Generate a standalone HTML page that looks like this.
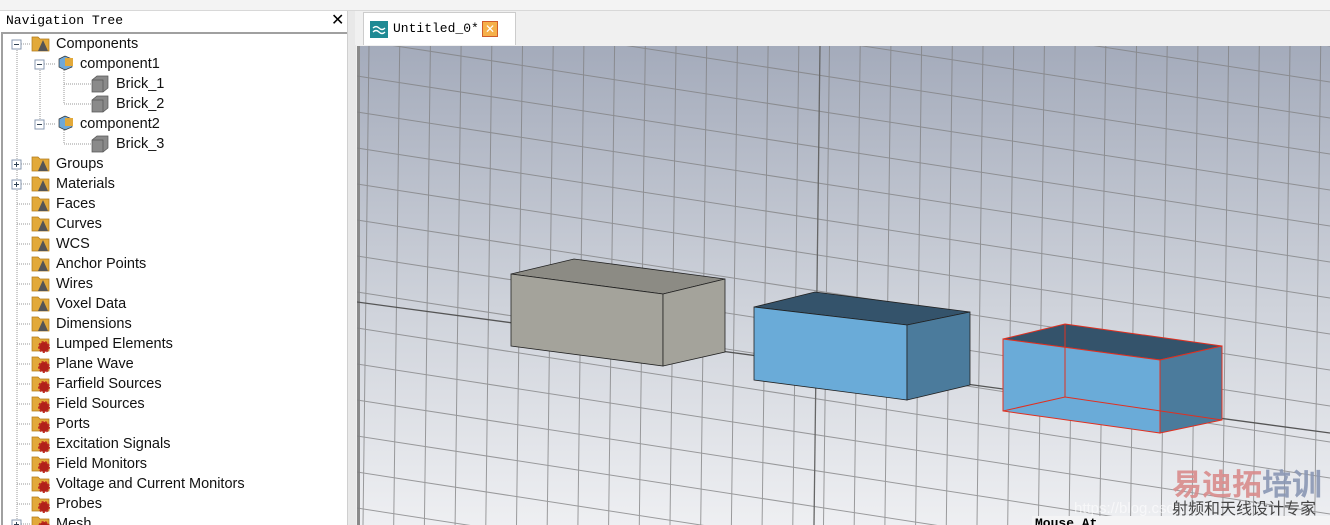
<!DOCTYPE html>
<html style="overflow:hidden"><head><meta charset="utf-8"><style>
html,body{margin:0;width:1330px;height:525px;overflow:hidden}
body{background:#f0f0f0;font-family:"Liberation Sans","DejaVu Sans",sans-serif;position:relative}
.top{position:absolute;left:0;top:0;width:1330px;height:10px;background:#f3f3f3;border-bottom:1px solid #d8d8d8}
.panel{position:absolute;left:0;top:11px;width:347px;height:514px;background:#fff;overflow:hidden}
.hdr{position:absolute;left:6px;top:2px;font-family:"Liberation Mono",monospace;font-size:13px;color:#000}
.x{position:absolute;left:331px;top:-1px;font-size:16px;font-weight:bold}
.tree{position:absolute;left:1px;top:21px;width:344px;height:500px;border-top:2px solid #a0a0a0;border-left:2px solid #a0a0a0}
.it{position:absolute;font-size:14.5px;color:#111;white-space:nowrap;line-height:18px}
.sep{position:absolute;left:347px;top:11px;width:8px;height:514px;background:#e8e8e8;border-left:1px solid #cfcfcf}
.tabbar{position:absolute;left:355px;top:11px;width:975px;height:34px;background:#f0f0f0}
.tab{position:absolute;left:363px;top:12px;width:151px;height:32px;background:#fff;border:1px solid #ccc;border-bottom:none}
.vp{position:absolute;left:357px;top:46px}
#clip{position:absolute;left:0;top:0;width:1330px;height:525px;overflow:hidden}
</style></head><body><div id="clip">
<div class="top"></div>
<div class="panel">
<div class="hdr">Navigation Tree</div><div class="x">✕</div>
<div class="tree"></div>
</div>
<svg style="position:absolute;left:0;top:0" width="347" height="525">
<g stroke="#999" stroke-dasharray="1,1" fill="none">
<line x1="17" y1="50" x2="17" y2="525"/>
<line x1="40" y1="70" x2="40" y2="124"/>
<line x1="64" y1="70" x2="64" y2="104"/>
<line x1="64" y1="130" x2="64" y2="144"/>
</g>
<g id="rows"></g>
</svg>
<div id="items"></div>
<div class="sep"></div>
<div class="tabbar"></div>
<div class="tab">
<div style="position:absolute;left:6px;top:8px;width:18px;height:17px;background:#1f8a94"><svg width="18" height="17"><path d="M3 7q3-3 6 0t6 0M3 11q3-3 6 0t6 0" stroke="#fff" stroke-width="1.3" fill="none"/></svg></div>
<div style="position:absolute;left:29px;top:8px;font-family:'Liberation Mono',monospace;font-size:13px">Untitled_0*</div>
<div style="position:absolute;left:118px;top:8px;width:14px;height:14px;background:#f6b04a;border:1px solid #d05b2b;color:#fff;font-size:12px;line-height:14px;text-align:center">✕</div>
</div>
<svg class="vp" width="973" height="479" viewBox="0 0 973 479">
<defs><linearGradient id="g" x1="0" y1="0" x2="0" y2="1"><stop offset="0" stop-color="#a4abbb"/><stop offset="0.55" stop-color="#cfd3db"/><stop offset="1" stop-color="#eeeff2"/></linearGradient></defs>
<rect width="973" height="479" fill="url(#g)"/>
<rect width="3" height="479" fill="#8a8a8a"/>
<g id="grid" stroke="#7f7f80" stroke-width="1" opacity="0.75"></g>
<line x1="0" y1="256" x2="973" y2="387" stroke="#555" stroke-width="1.3"/>
<line x1="463" y1="0" x2="457" y2="479" stroke="#666" stroke-width="1.3"/>
<polygon points="154,228 217,213 368,233 306,248" fill="#8c8b84" stroke="#222" stroke-width="0.8"/>
<polygon points="154,228 306,248 306,320 154,300" fill="#a4a39b" stroke="#222" stroke-width="0.8"/>
<polygon points="306,248 368,233 368,306 306,320" fill="#a4a39b" stroke="#222" stroke-width="0.8"/>
<polygon points="397,261 458,246 613,266 550,279" fill="#34536b" stroke="#222" stroke-width="0.8"/>
<polygon points="397,261 550,279 550,354 397,334" fill="#6aabd8" stroke="#222" stroke-width="0.8"/>
<polygon points="550,279 613,266 613,339 550,354" fill="#4b7b9c" stroke="#222" stroke-width="0.8"/>
<polygon points="646,293 708,278 865,300 803,314" fill="#34536b" stroke="#e03020" stroke-width="1"/>
<polygon points="646,293 803,314 803,387 646,365" fill="#6aabd8" stroke="#e03020" stroke-width="1"/>
<polygon points="803,314 865,300 865,374 803,387" fill="#4b7b9c" stroke="#e03020" stroke-width="1"/>
<g stroke="#e03020" stroke-width="1" fill="none"><line x1="708" y1="278" x2="708" y2="351"/><polyline points="646,365 708,351 865,374"/></g>
<rect x="675" y="470" width="300" height="9" fill="#f4f4f5"/>
<text x="678" y="481" font-family="Liberation Mono,monospace" font-size="13" font-weight="bold">Mouse At</text>
<text x="815" y="449" font-family="'Noto Sans CJK SC',sans-serif" font-size="30" font-weight="bold" fill="#d98c8c" opacity="0.9">易迪拓</text>
<text x="905" y="449" font-family="'Noto Sans CJK SC',sans-serif" font-size="30" font-weight="bold" fill="#8a97b4" opacity="0.9">培训</text>
<text x="717" y="467" font-family="Liberation Sans,sans-serif" font-size="15" fill="#fff" opacity="0.6">https://blog.csdn.net/</text>
<text x="815" y="468" font-family="'Noto Sans CJK SC',sans-serif" font-size="16" fill="#444">射频和天线设计专家</text>
</svg>
</div>
<script>
var s=document.getElementById('grid'),h='';
for(var x=12;x<980;x+=30.7){h+='<line x1="'+x+'" y1="0" x2="'+(x-6)+'" y2="479"/>';}
for(var y=-150;y<480;y+=36){h+='<line x1="0" y1="'+y+'" x2="973" y2="'+(y+150)+'"/>';}
s.innerHTML=h;
var rows=[["Components",56,0,"g"],["component1",80,1,"c"],["Brick_1",116,2,"b"],["Brick_2",116,2,"b"],["component2",80,1,"c"],["Brick_3",116,2,"b"],["Groups",56,0,"g","+"],["Materials",56,0,"g","+"],["Faces",56,0,"g"],["Curves",56,0,"g"],["WCS",56,0,"g"],["Anchor Points",56,0,"g"],["Wires",56,0,"g"],["Voxel Data",56,0,"g"],["Dimensions",56,0,"g"],["Lumped Elements",56,0,"r"],["Plane Wave",56,0,"r"],["Farfield Sources",56,0,"r"],["Field Sources",56,0,"r"],["Ports",56,0,"r"],["Excitation Signals",56,0,"r"],["Field Monitors",56,0,"r"],["Voltage and Current Monitors",56,0,"r"],["Probes",56,0,"r"],["Mesh",56,0,"r","+"]];
var sv='',hh='';
rows.forEach(function(r,i){var cy=44+i*20,ix=r[1]-25;
 hh+='<div class="it" style="left:'+r[1]+'px;top:'+(cy-9)+'px">'+r[0]+'</div>';
 var lx=r[2]==0?17:(r[2]==1?40:64);
 sv+='<line x1="'+lx+'" y1="'+cy+'" x2="'+(ix)+'" y2="'+cy+'" stroke="#999" stroke-dasharray="1,1"/>';
 if(r[0]=="Components"||r[0].indexOf("component")==0||r[4]){var bx=r[2]==1?35:12;sv+='<rect x="'+bx+'" y="'+(cy-4)+'" width="9" height="9" fill="#fff" stroke="#8a9ab0"/><line x1="'+(bx+2)+'" y1="'+(cy+.5)+'" x2="'+(bx+7)+'" y2="'+(cy+.5)+'" stroke="#345"/>'+(r[4]?'<line x1="'+(bx+4.5)+'" y1="'+(cy-2)+'" x2="'+(bx+4.5)+'" y2="'+(cy+3)+'" stroke="#345"/>':'');}
 if(r[3]=="g"||r[3]=="r"){sv+='<path d="M'+(ix+1)+' '+(cy-7)+'h6l2 2h9v12h-17z" fill="#e2a93a" stroke="#b07a1a" stroke-width="0.7"/>';
  if(r[3]=="g")sv+='<path d="M'+(ix+12)+' '+(cy-4)+'l5 11h-10z" fill="#555"/>';else sv+='<circle cx="'+(ix+13)+'" cy="'+(cy+3)+'" r="5" fill="#b0201a" stroke="#c02a20" stroke-dasharray="2,1.5" stroke-width="2"/>';}
 if(r[3]=="c")sv+='<path d="M'+(ix+4)+' '+(cy-5)+'l6-3 7 3v8l-7 3-6-3z" fill="#6ea8d8" stroke="#333" stroke-width="0.7"/><rect x="'+(ix+10)+'" y="'+(cy-6)+'" width="8" height="8" fill="#e2a93a"/>';
 if(r[3]=="b")sv+='<path d="M'+(ix+1)+' '+(cy-4)+'l5-4h11v12l-5 4h-11z" fill="#8a8a8a" stroke="#555" stroke-width="0.7"/><path d="M'+(ix+1)+' '+(cy-4)+'h11v12" fill="none" stroke="#555" stroke-width="0.7"/>';
});
document.getElementById('rows').innerHTML=sv;document.getElementById('items').innerHTML=hh;
</script>
</body></html>
